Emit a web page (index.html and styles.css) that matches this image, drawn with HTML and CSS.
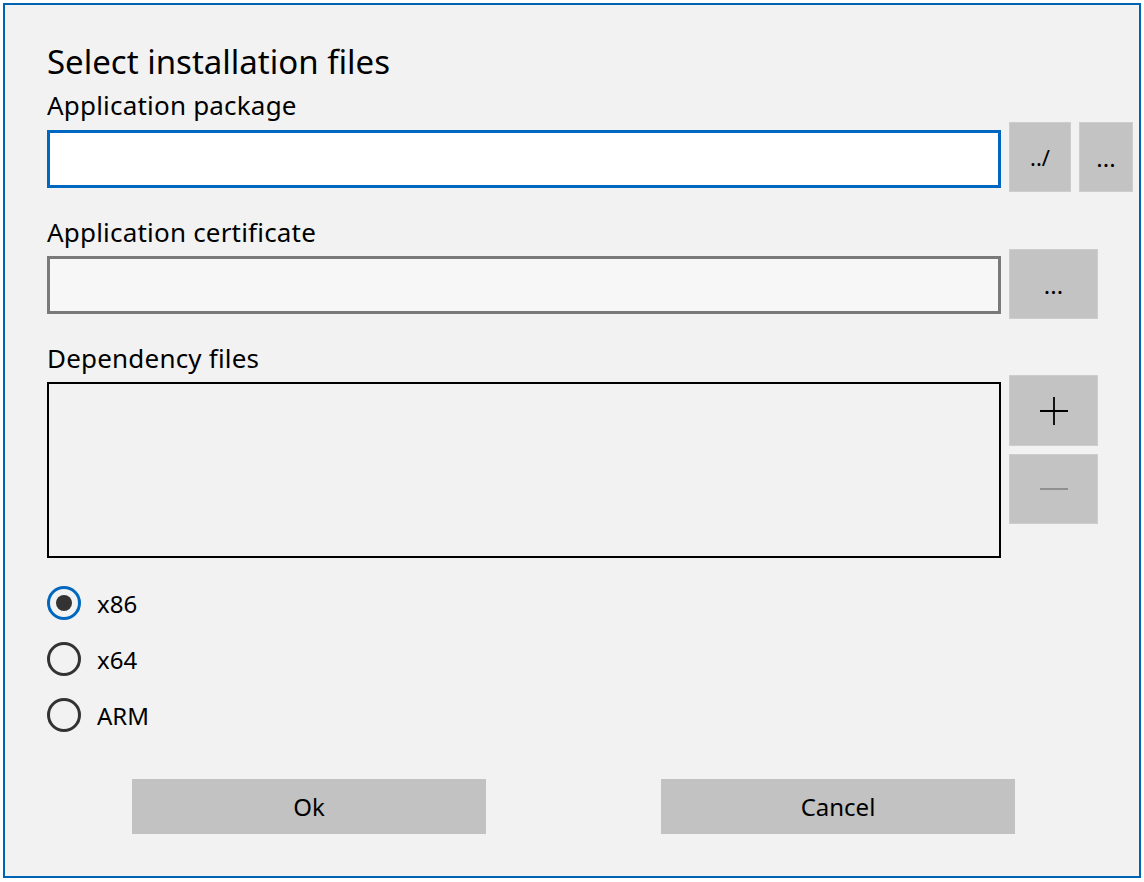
FILE: index.html
```html
<!DOCTYPE html>
<html>
<head>
<meta charset="utf-8">
<link rel="stylesheet" href="styles.css">
</head>
<body>
<div class="window">
  <h1 class="title">Select installation files</h1>

  <div class="label">Application package</div>
  <div class="row row-pkg">
    <div class="input input-active"></div>
    <button class="btn btn-small btn-up">../</button>
    <button class="btn btn-tiny">...</button>
  </div>

  <div class="label label-gap">Application certificate</div>
  <div class="row row-cert">
    <div class="input input-idle"></div>
    <button class="btn btn-wide">...</button>
  </div>

  <div class="label label-gap2">Dependency files</div>
  <div class="row row-dep">
    <div class="listbox"></div>
    <div class="btn-col">
      <button class="btn btn-wide btn-plus">
        <svg width="30" height="30" viewBox="0 0 30 30"><path d="M15 1V29M1 15H29" stroke="#000" stroke-width="1.8" fill="none"/></svg>
      </button>
      <button class="btn btn-wide btn-minus">
        <svg width="30" height="30" viewBox="0 0 30 30"><path d="M1 15H29" stroke="#8a8a8a" stroke-width="1.8" fill="none"/></svg>
      </button>
    </div>
  </div>

  <div class="radios">
    <label class="radio"><span class="circle checked"><span class="dot"></span></span><span class="rtext">x86</span></label>
    <label class="radio"><span class="circle"></span><span class="rtext">x64</span></label>
    <label class="radio"><span class="circle"></span><span class="rtext">ARM</span></label>
  </div>

  <div class="actions">
    <button class="btn action">Ok</button>
    <button class="btn action">Cancel</button>
  </div>
</div>
</body>
</html>
```

FILE: styles.css
```css
html, body {
  margin: 0;
  padding: 0;
  background: #ffffff;
}

body {
  font-family: "Noto Sans", "Open Sans", sans-serif;
  color: #000;
}

.window {
  margin: 3px;
  width: 1138px;
  height: 875px;
  box-sizing: border-box;
  border: 2px solid #0063b1;
  background: #f2f2f2;
  padding: 37px 0 0 42px;
}

.title {
  margin: 0;
  font-size: 33px;
  font-weight: 400;
  line-height: 40px;
  height: 40px;
}

.label {
  font-size: 26px;
  letter-spacing: 0.2px;
  line-height: 30px;
  height: 30px;
  margin-top: 8px;
  margin-bottom: 2px;
}

.label-gap { margin-top: 25px; }
.label-gap2 { margin-top: 24px; }

.row {
  display: flex;
  align-items: flex-start;
  gap: 8px;
}

.input {
  width: 954px;
  height: 58px;
  box-sizing: border-box;
  border: 3px solid #0067c0;
}

.input-active {
  background: #ffffff;
  border-color: #0067c0;
  margin-top: 8px;
}

.input-idle {
  background: #f7f7f7;
  border-color: #7a7a7a;
  margin-top: 7px;
}

.btn {
  font-family: "Noto Sans", "Open Sans", sans-serif;
  font-size: 24px;
  color: #000;
  background: #c3c3c3;
  border: 1px solid #cdcdcd;
  box-sizing: border-box;
  padding: 0;
  margin: 0;
  display: flex;
  align-items: center;
  justify-content: center;
}

.btn-small { width: 62px; height: 70px; }
.btn-tiny { width: 54px; height: 70px; }
.btn-wide { width: 89px; height: 70px; }

.btn-up { font-size: 22px; }

.listbox {
  width: 954px;
  height: 176px;
  box-sizing: border-box;
  border: 2px solid #000;
  background: #f2f2f2;
  margin-top: 7px;
}

.btn-col {
  display: flex;
  flex-direction: column;
  gap: 8px;
}

.btn-plus { height: 71px; }
.btn-minus { height: 70px; }

.radios {
  margin-top: 17px;
  display: flex;
  flex-direction: column;
}

.radio {
  height: 56px;
  display: flex;
  align-items: center;
  gap: 16px;
  font-size: 24px;
}

.circle {
  width: 34px;
  height: 34px;
  box-sizing: border-box;
  border: 3px solid #333333;
  border-radius: 50%;
  display: flex;
  align-items: center;
  justify-content: center;
}

.circle.checked {
  border-color: #0067c0;
}

.dot {
  width: 16px;
  height: 16px;
  border-radius: 50%;
  background: #333333;
}

.actions {
  margin-top: 36px;
  margin-left: 85px;
  display: flex;
  gap: 175px;
}

.action {
  width: 354px;
  height: 55px;
  border: none;
  background: #c2c2c2;
}
```
